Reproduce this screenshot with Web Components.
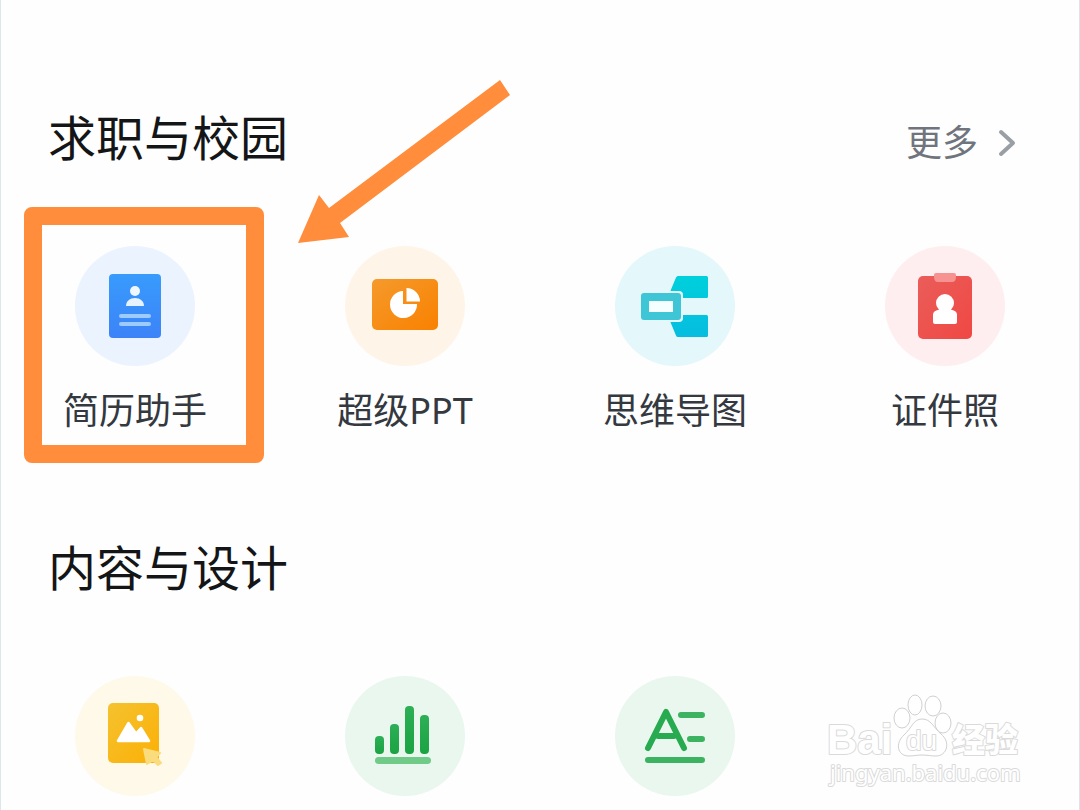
<!DOCTYPE html>
<html lang="zh-CN">
<head>
<meta charset="utf-8">
<meta name="viewport" content="width=device-width, initial-scale=1">
<title>求职与校园</title>
<style>
  body {
    margin: 0;
    background: #fefefe;
    font-family: "Noto Sans", "Noto Sans CJK SC", sans-serif;
  }
</style>
</head>
<body>
<tool-page>
  <tool-section>
    <span slot="title">求职与校园</span>
    <more-link slot="more">更多</more-link>
    <tool-item icon="resume" tint="#ebf3fe">简历助手<highlight-frame slot="overlay"></highlight-frame></tool-item>
    <tool-item icon="ppt" tint="#fef5e8">超级PPT</tool-item>
    <tool-item icon="mindmap" tint="#e4f7fa">思维导图</tool-item>
    <tool-item icon="idphoto" tint="#feeeef">证件照</tool-item>
  </tool-section>
  <tool-section>
    <span slot="title">内容与设计</span>
    <tool-item icon="image" tint="#fff9e9"></tool-item>
    <tool-item icon="chart" tint="#e9f7ee"></tool-item>
    <tool-item icon="text" tint="#e9f7ee"></tool-item>
  </tool-section>
  <pointer-arrow slot="overlay"></pointer-arrow>
  <site-watermark slot="overlay"></site-watermark>
</tool-page>

<script>
const icons = {
  resume: `
    <linearGradient id="g" x1="0" y1="0" x2="0" y2="1"><stop stop-color="#389bfc"/><stop offset="1" stop-color="#3c83f8"/></linearGradient>
    <rect x="34" y="28" width="52" height="64" rx="4" fill="url(#g)"/>
    <circle cx="60" cy="45" r="5" fill="#f0f8ff"/>
    <path d="M51 60c0-5 4-8 9-8s9 3 9 8z" fill="#e6f3ff"/>
    <rect x="44" y="68" width="32" height="4" rx="2" fill="#9dcbfd"/>
    <rect x="44" y="76" width="32" height="4" rx="2" fill="#9dcbfd"/>`,
  ppt: `
    <linearGradient id="g" x1="0" y1="0" x2="1" y2="1"><stop stop-color="#f59a2c"/><stop offset="1" stop-color="#f98100"/></linearGradient>
    <rect x="27" y="33" width="66" height="51" rx="5" fill="url(#g)"/>
    <path d="M58 45V58H72A13.5 13.5 0 1 1 58 45zM61.5 42A13.5 13.5 0 0 1 75 55.5H61.5z" fill="#fff"/>`,
  mindmap: `
    <linearGradient id="g" x1="0" y1="0" x2="0" y2="1"><stop stop-color="#00d0dc"/><stop offset="1" stop-color="#06bde0"/></linearGradient>
    <path d="M63 30H91.500Q93 30 93 31.500V50.500Q93 52 91.500 52H67L55 46L61 31.500Q61.700 30 63 30zM67 69H91.500Q93 69 93 70.500V89.500Q93 91 91.500 91H63Q61.500 91 61 89.500L55 75z" fill="url(#g)"/>
    <rect x="24" y="45" width="44" height="31" rx="4" fill="#e4f7fa"/>
    <rect x="26" y="47" width="40" height="27" rx="3" fill="#3fc6d6"/>
    <rect x="34" y="55" width="24" height="11" fill="#f5ffff"/>`,
  idphoto: `
    <linearGradient id="g" x1="0" y1="0" x2="1" y2="1"><stop stop-color="#ea5d5a"/><stop offset="1" stop-color="#f04843"/></linearGradient>
    <rect x="33" y="30" width="54" height="63" rx="5" fill="url(#g)"/>
    <path d="M49 29q0-2 2-2h18q2 0 2 2v2q0 5-4 5H53q-4 0-4-5z" fill="#f6928f"/>
    <circle cx="60" cy="57" r="9" fill="#fff"/>
    <path d="M55 63.500h10q7 1 7 5V76q0 2-2 2H50q-2 0-2-2v-7.500q0-4 7-5z" fill="#fff"/>`,
  image: `
    <linearGradient id="g" x1="0" y1="0" x2="1" y2="1"><stop stop-color="#f5c22f"/><stop offset="1" stop-color="#fbb006"/></linearGradient>
    <rect x="33" y="27" width="51" height="60" rx="5" fill="url(#g)"/>
    <circle cx="65" cy="42" r="3.300" fill="#fff"/>
    <path d="M43 65L53.500 47L61 57.500L66 52L74 65z" fill="#fff" stroke="#fff" stroke-width="2.500" stroke-linejoin="round"/>
    <path d="M69 73L85 77L81 81L86 87L83 89L78 84L72 88z" fill="#fbdc7c" stroke="#fbdc7c" stroke-width="2" stroke-linejoin="round"/>`,
  chart: `
    <linearGradient id="g" x1="0" y1="0" x2="0" y2="1"><stop stop-color="#2daf56"/><stop offset="1" stop-color="#1aa343"/></linearGradient>
    <g fill="url(#g)">
      <rect x="30" y="60" width="9" height="18" rx="4"/>
      <rect x="45" y="48" width="9" height="30" rx="4"/>
      <rect x="60" y="30" width="9" height="48" rx="4"/>
      <rect x="75" y="39" width="9" height="39" rx="4"/>
    </g>
    <rect x="30" y="81" width="56" height="7" rx="3.500" fill="#70ca88"/>`,
  text: `
    <g fill="none" stroke-width="6" stroke-linecap="round" stroke-linejoin="round">
      <path d="M66 39H87M75 63H87M33 84H87" stroke="#3bb361"/>
      <path d="M33 72L51 36L69 72M43 60H59" stroke="#28ab50"/>
    </g>`
};

function attach(el, html) {
  const template = document.createElement('template');
  template.innerHTML = html;
  const shadow = el.attachShadow({ mode: 'open' });
  shadow.appendChild(template.content.cloneNode(true));
  return shadow;
}

class ToolPage extends HTMLElement {
  constructor() {
    super();
    attach(this, `
      <style>
        :host {
          display: block;
          position: relative;
          box-sizing: border-box;
          min-height: 100vh;
          box-shadow: inset 1px 0 #dde6ea, inset -1px 0 #dde3ea;
        }
        main {
          display: flex;
          flex-direction: column;
          gap: 94px;
          padding-top: 102px;
        }
      </style>
      <main><slot></slot></main>
      <slot name="overlay"></slot>
    `);
  }
}

class ToolSection extends HTMLElement {
  constructor() {
    super();
    attach(this, `
      <style>
        :host { display: block; }
        header {
          display: flex;
          justify-content: space-between;
          align-items: baseline;
          padding: 0 64px 0 48px;
          margin-bottom: 72px;
        }
        h2 {
          margin: 0;
          font-size: 48px;
          font-weight: 400;
          line-height: 72px;
          color: #141517;
        }
        .grid {
          display: grid;
          grid-template-columns: repeat(4, 1fr);
        }
      </style>
      <section>
        <header>
          <h2><slot name="title"></slot></h2>
          <slot name="more"></slot>
        </header>
        <div class="grid"><slot></slot></div>
      </section>
    `);
  }
}

class MoreLink extends HTMLElement {
  constructor() {
    super();
    attach(this, `
      <style>
        :host { display: block; }
        a {
          display: flex;
          align-items: center;
          gap: 20px;
          color: #70757d;
          font-size: 36px;
          line-height: 54px;
          text-decoration: none;
        }
      </style>
      <a href="#"><slot></slot>
        <svg width="18" height="28" viewBox="0 0 18 28" fill="none" stroke="#9a9fa6" stroke-width="4" stroke-linecap="round" stroke-linejoin="round" aria-hidden="true"><path d="M3 3L15 14L3 25"/></svg>
      </a>
    `);
  }
}

class ToolItem extends HTMLElement {
  constructor() {
    super();
    const shadow = attach(this, `
      <style>
        :host {
          display: block;
          position: relative;
        }
        a {
          display: flex;
          flex-direction: column;
          align-items: center;
          gap: 18px;
          color: #34383f;
          font-size: 36px;
          line-height: 54px;
          text-decoration: none;
        }
        svg {
          display: block;
          border-radius: 50%;
        }
      </style>
      <a href="#">
        <svg width="120" height="120" viewBox="0 0 120 120" aria-hidden="true">${icons[this.getAttribute('icon')]}</svg>
        <slot></slot>
      </a>
      <slot name="overlay"></slot>
    `);
    shadow.querySelector('svg').style.background = this.getAttribute('tint');
  }
}

class HighlightFrame extends HTMLElement {
  constructor() {
    super();
    attach(this, `
      <style>
        :host {
          position: absolute;
          inset: -39px 6px -25px 24px;
          box-sizing: border-box;
          border: 18px solid #ff8d3b;
          border-radius: 8px;
          pointer-events: none;
        }
      </style>
    `);
  }
}

class PointerArrow extends HTMLElement {
  constructor() {
    super();
    attach(this, `
      <style>
        :host {
          position: absolute;
          left: 298px;
          top: 80px;
          pointer-events: none;
        }
        svg { display: block; }
      </style>
      <svg width="212" height="163" viewBox="0 0 212 163" aria-hidden="true">
        <path d="M202 0L212 15L42 143L51 157L0 163L21 115L31 128z" fill="#ff8d3b"/>
      </svg>
    `);
  }
}

class SiteWatermark extends HTMLElement {
  constructor() {
    super();
    attach(this, `
      <style>
        :host {
          position: absolute;
          right: 52px;
          top: 690px;
          pointer-events: none;
        }
        svg {
          display: block;
          fill: #fff;
          stroke: #dadada;
          stroke-width: 2px;
          stroke-linejoin: round;
        }
        text { paint-order: stroke; }
        .paw { stroke-width: 1px; stroke: #d0d0d0; }
        .latin { font: 700 42px "Liberation Sans", Arial, sans-serif; }
        .du { font: 400 28px "Liberation Sans", Arial, sans-serif; }
        .cjk { font: 900 33px "Noto Sans CJK SC", sans-serif; }
        .url { font: 400 22px "Noto Sans", sans-serif; }
      </style>
      <svg width="204" height="104" viewBox="0 0 204 104">
        <text class="latin" x="3" y="64">Bai</text>
        <g class="paw">
          <ellipse cx="78" cy="28" rx="8" ry="10"/>
          <ellipse cx="91" cy="15" rx="7" ry="10"/>
          <ellipse cx="109" cy="16" rx="8" ry="10"/>
          <ellipse cx="119" cy="33" rx="8" ry="10"/>
          <path d="M98 29C107 29 109 37 117 44C127 52 123 66 112 66C107 66 104 65 98 65C92 65 90 66 85 66C73 66 71 53 80 45C88 38 89 29 98 29z"/>
        </g>
        <text class="du" x="82" y="60">du</text>
        <text class="cjk" x="128" y="62">经验</text>
        <text class="url" x="6" y="91">jingyan.baidu.com</text>
      </svg>
    `);
  }
}

customElements.define('tool-page', ToolPage);
customElements.define('tool-section', ToolSection);
customElements.define('more-link', MoreLink);
customElements.define('tool-item', ToolItem);
customElements.define('highlight-frame', HighlightFrame);
customElements.define('pointer-arrow', PointerArrow);
customElements.define('site-watermark', SiteWatermark);
</script>
</body>
</html>
